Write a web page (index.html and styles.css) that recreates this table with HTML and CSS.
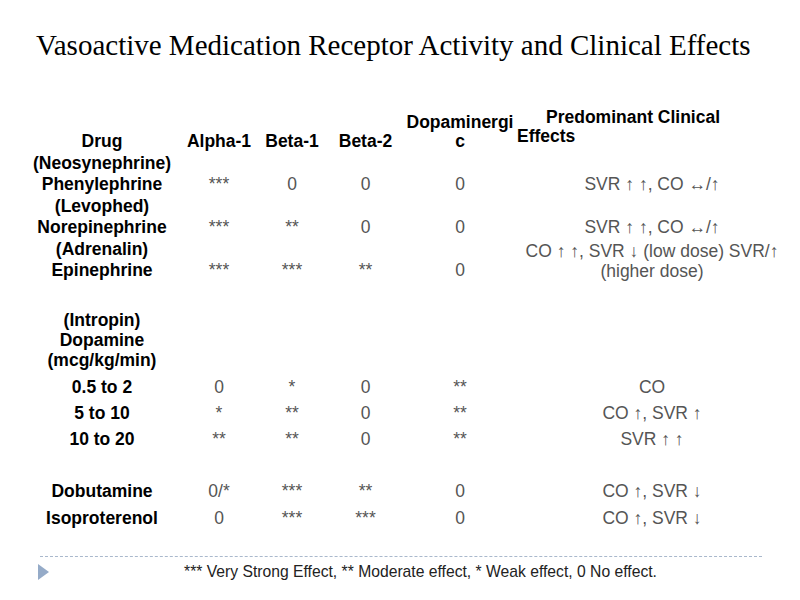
FILE: index.html
```html
<!DOCTYPE html>
<html>
<head>
<meta charset="utf-8">
<link rel="stylesheet" href="styles.css">
</head>
<body>
<div class="slide">
  <h1 class="title">Vasoactive Medication Receptor Activity and Clinical Effects</h1>
  <table class="grid">
    <colgroup>
      <col class="c-drug"><col class="c-a1"><col class="c-b1"><col class="c-b2"><col class="c-dop"><col class="c-eff">
    </colgroup>
    <thead>
      <tr class="head">
        <th>Drug</th>
        <th>Alpha-1</th>
        <th>Beta-1</th>
        <th class="b2">Beta-2</th>
        <th>Dopaminergi<br>c</th>
        <th class="eff-h">Predominant Clinical<br>Effects</th>
      </tr>
    </thead>
    <tbody>
      <tr class="r2">
        <th>(Neosynephrine)<br>Phenylephrine</th>
        <td>***</td><td>0</td><td class="b2">0</td><td>0</td><td>SVR ↑ ↑, CO ↔/↑</td>
      </tr>
      <tr class="r2">
        <th>(Levophed)<br>Norepinephrine</th>
        <td>***</td><td>**</td><td class="b2">0</td><td>0</td><td>SVR ↑ ↑, CO ↔/↑</td>
      </tr>
      <tr class="r2">
        <th>(Adrenalin)<br>Epinephrine</th>
        <td>***</td><td>***</td><td class="b2">**</td><td>0</td><td class="eff2">CO ↑ ↑, SVR ↓ (low dose) SVR/↑<br>(higher dose)</td>
      </tr>
      <tr class="gap1"><th></th><td></td><td></td><td></td><td></td><td></td></tr>
      <tr class="r3">
        <th>(Intropin)<br>Dopamine<br>(mcg/kg/min)</th>
        <td></td><td></td><td></td><td></td><td></td>
      </tr>
      <tr class="r1">
        <th>0.5 to 2</th>
        <td>0</td><td>*</td><td class="b2">0</td><td>**</td><td>CO</td>
      </tr>
      <tr class="r1">
        <th>5 to 10</th>
        <td>*</td><td>**</td><td class="b2">0</td><td>**</td><td>CO ↑, SVR ↑</td>
      </tr>
      <tr class="r1">
        <th>10 to 20</th>
        <td>**</td><td>**</td><td class="b2">0</td><td>**</td><td>SVR ↑ ↑</td>
      </tr>
      <tr class="r1"><th></th><td></td><td></td><td></td><td></td><td></td></tr>
      <tr class="r1">
        <th>Dobutamine</th>
        <td>0/*</td><td>***</td><td class="b2">**</td><td>0</td><td>CO ↑, SVR ↓</td>
      </tr>
      <tr class="r1 last">
        <th>Isoproterenol</th>
        <td>0</td><td>***</td><td class="b2">***</td><td>0</td><td>CO ↑, SVR ↓</td>
      </tr>
    </tbody>
  </table>
  <div class="footer">
    <div class="rule"></div>
    <div class="foot-row">
      <span class="tri"></span>
      <p class="note">*** Very Strong Effect, ** Moderate effect, * Weak effect, 0 No effect.</p>
    </div>
  </div>
</div>
</body>
</html>
```

FILE: styles.css
```css
html, body {
  margin: 0;
  padding: 0;
  background: #ffffff;
}
.slide {
  width: 800px;
  height: 600px;
  position: relative;
  overflow: hidden;
  font-family: "Liberation Sans", Arial, sans-serif;
}
.title {
  margin: 29px 0 0 36px;
  font-family: "Liberation Serif", "Times New Roman", serif;
  font-weight: normal;
  font-size: 29px;
  line-height: 32px;
  color: #000;
  white-space: nowrap;
}
.grid {
  margin: 41px 0 0 30px;
  border-collapse: collapse;
  table-layout: fixed;
  width: 757px;
}
.c-drug { width: 144px; }
.c-a1 { width: 90px; }
.c-b1 { width: 56px; }
.c-b2 { width: 83px; }
.c-dop { width: 114px; }
.c-eff { width: 270px; }
.grid th, .grid td {
  padding: 0;
  text-align: center;
  vertical-align: bottom;
  white-space: nowrap;
}
.grid th {
  font-weight: bold;
  font-size: 17.5px;
  color: #000;
  line-height: 21px;
}
.grid td {
  font-size: 17.5px;
  color: #555555;
  line-height: 20.5px;
}
.grid .b2 { padding-left: 8px; }
.head th {
  line-height: 19px;
  height: 44px;
  padding-bottom: 1px;
}
.head th.eff-h {
  text-align: left;
  text-indent: 29px;
  padding-bottom: 6px;
}
.r2 th, .r2 td { height: 42px; }
.r2 td { padding-bottom: 1px; }
.r2 td.eff2 { padding-bottom: 0; line-height: 20px; }
.gap1 th, .gap1 td { height: 26px; }
.r3 th { height: 63px; line-height: 20px; padding-bottom: 4px; }
.r1 th, .r1 td { height: 26px; vertical-align: middle; }
.r1 th { line-height: 26px; }
.r1 td { line-height: 26px; }
.last th, .last td { height: 27px; }
.footer {
  margin: 25px 0 0 40px;
  width: 722px;
}
.rule {
  border-top: 1px dashed #a9b8cc;
}
.foot-row {
  display: flex;
  align-items: center;
  margin-left: -2px;
  margin-top: 6px;
}
.tri {
  width: 0;
  height: 0;
  border-top: 8px solid transparent;
  border-bottom: 8px solid transparent;
  border-left: 11px solid #95abc8;
  flex: none;
}
.note {
  margin: 0;
  flex: 1;
  text-align: center;
  padding-left: 30px;
  font-size: 15.7px;
  line-height: 17px;
  color: #222;
}
```
